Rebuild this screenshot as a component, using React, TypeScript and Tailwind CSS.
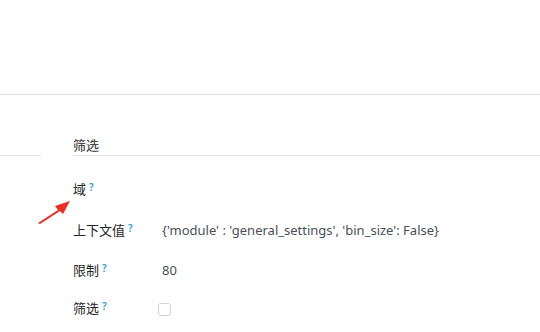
import React from "react";

function Q() {
  return <sup className="ml-[3px] text-[10px] font-semibold text-[#2a9fd6] relative -top-[3px]">?</sup>;
}

function Row({ label, children }: { label: string; children?: React.ReactNode }) {
  return (
    <div className="flex items-center h-[20px]">
      <div className="w-[89px] shrink-0 text-[13px] text-[#212529]">
        {label}
        <Q />
      </div>
      <div className="text-[13px] text-[#4a5057]">{children}</div>
    </div>
  );
}

export default function App() {
  return (
    <div
      className="relative w-[540px] h-[332px] bg-white overflow-hidden"
      style={{ fontFamily: '"Noto Sans", "Noto Sans CJK SC", sans-serif' }}
    >
      <div className="h-[95px] border-b border-[#e2e2e2]" />
      <div className="flex mt-[41px]">
        <div className="w-[41px] border-b border-[#e2e2e2]" />
        <div className="w-[32px]" />
        <div className="flex-1 border-b border-[#e2e2e2] text-[13px] leading-[19px] text-[#4c4c4c] font-medium">
          筛选
        </div>
      </div>
      <div className="pl-[73px] pt-[24px] flex flex-col gap-[21px]">
        <Row label="域" />
        <Row label="上下文值">{"{'module' : 'general_settings', 'bin_size': False}"}</Row>
        <div className="-mt-[1px]">
          <Row label="限制">80</Row>
        </div>
        <div className="-mt-[3px]">
          <Row label="筛选">
            <div className="w-[13px] h-[13px] -ml-[4px] rounded-[3px] border border-[#d0d4d8] bg-white" />
          </Row>
        </div>
      </div>
      <svg className="absolute left-[36px] top-[199px]" width="36" height="26" viewBox="0 0 36 26">
        <polygon points="2,24 22,11 19,7 34,2 27,15 24,12 4,25" fill="#ee2a24" />
      </svg>
    </div>
  );
}
